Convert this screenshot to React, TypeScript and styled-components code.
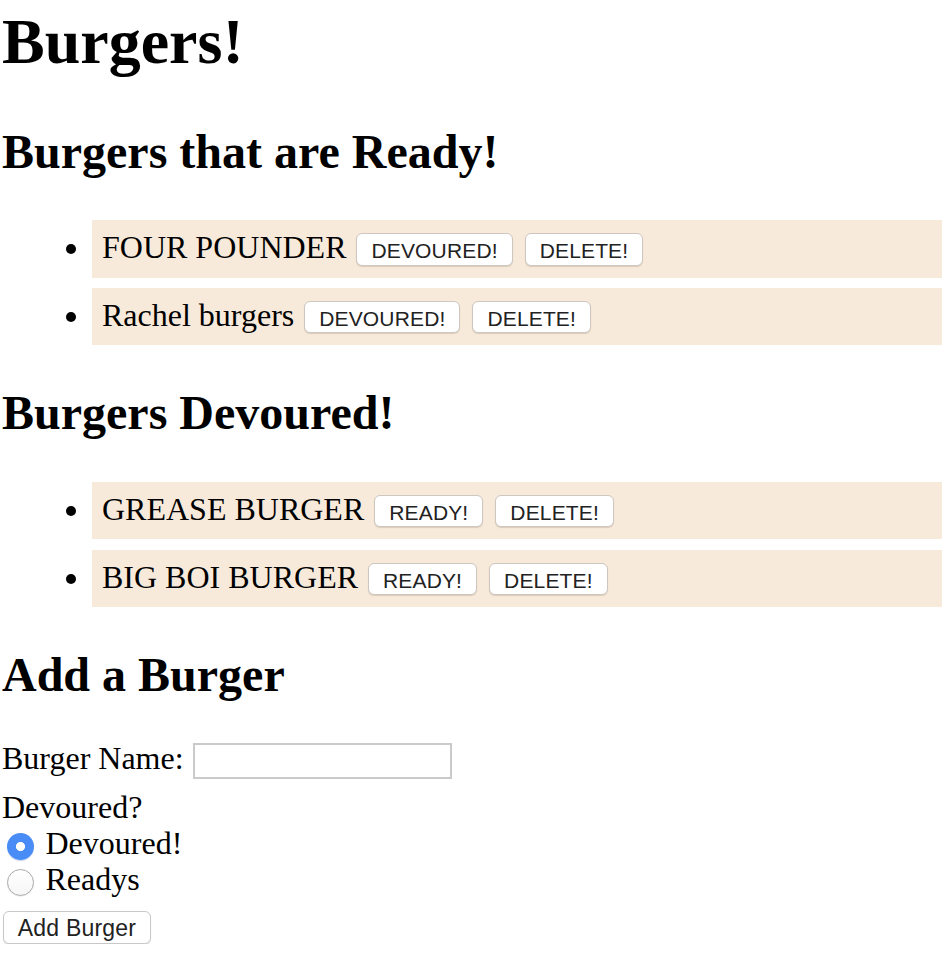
import React, { useState } from "react";
import styled, { createGlobalStyle } from "styled-components";

type Burger = { id: number; name: string; devoured: boolean };

const initialBurgers: Burger[] = [
  { id: 1, name: "FOUR POUNDER", devoured: false },
  { id: 2, name: "Rachel burgers", devoured: false },
  { id: 3, name: "GREASE BURGER", devoured: true },
  { id: 4, name: "BIG BOI BURGER", devoured: true },
];

const GlobalStyle = createGlobalStyle`
  html, body {
    margin: 0;
    padding: 0;
    background: #fff;
  }
  body {
    font-family: "Liberation Serif", "Times New Roman", serif;
    font-size: 32px;
    color: #000;
  }
`;

const Page = styled.div`
  padding: 6px 0 0 2px;
`;

const Title = styled.h1`
  margin: 0 0 46.5px;
  font-size: 64px;
  line-height: 72px;
  font-weight: bold;
`;

const SectionTitle = styled.h2`
  margin: 0;
  font-size: 48px;
  line-height: 54px;
  font-weight: bold;
`;

const BurgerList = styled.ul`
  margin: 41.5px 0 41px;
  padding: 0 0 0 80px;
  list-style: disc outside;
`;

const BurgerItem = styled.li`
  margin: 0 0 0 10px;
  padding: 8px 10px 10px;
  line-height: 39.5px;
  background: #f8eadb;

  & + & {
    margin-top: 10.3px;
  }
`;

const ItemButton = styled.button`
  display: inline-block;
  vertical-align: baseline;
  box-sizing: border-box;
  height: 32.5px;
  margin: 0 2px;
  padding: 3px 14px 0;
  font-family: "Liberation Sans", Arial, sans-serif;
  font-size: 21px;
  letter-spacing: 0.15px;
  line-height: 27.5px;
  color: #222;
  background: #fff;
  border: 1px solid #cdc7c0;
  border-radius: 6px;
  box-shadow: 0 1px 1px rgba(90, 70, 40, 0.18);
  cursor: pointer;
`;

const AddForm = styled.form`
  margin-top: 37.5px;
`;

const FieldRow = styled.div`
  display: flex;
  align-items: flex-start;
  line-height: 37px;
`;

const NameInput = styled.input`
  box-sizing: border-box;
  width: 259.4px;
  height: 35.4px;
  margin: 3.6px 0 0 9px;
  padding: 0 6px;
  font-family: "Liberation Sans", Arial, sans-serif;
  font-size: 22px;
  border: 2px solid #cacaca;
  border-radius: 0;
  outline: none;
`;

const Question = styled.div`
  margin-top: 10.8px;
  line-height: 36px;
`;

const RadioRow = styled.label`
  display: flex;
  align-items: flex-start;
  line-height: 36px;
`;

const Radio = styled.input`
  appearance: none;
  box-sizing: border-box;
  flex: none;
  width: 27px;
  height: 27px;
  margin: 8px 12px 0 4.5px;
  border-radius: 50%;
  border: 1.5px solid #aaaaaa;
  background: linear-gradient(#fff, #f6f6f6);
  box-shadow: 0 0.5px 1px rgba(0, 0, 0, 0.1);
  cursor: pointer;

  &:checked {
    border: none;
    background: radial-gradient(circle, #fff 0 4.2px, #4a8cf6 4.9px);
    box-shadow: 0 1px 1px rgba(30, 80, 180, 0.25);
  }
`;

const AddButton = styled.button`
  display: block;
  box-sizing: border-box;
  width: 147.4px;
  height: 33.3px;
  margin: 13.5px 0 0 1.3px;
  padding: 1px 0 0;
  font-family: "Liberation Sans", Arial, sans-serif;
  font-size: 23px;
  letter-spacing: 0.2px;
  color: #222;
  background: #fff;
  border: 1px solid #c8c8c8;
  border-radius: 6px;
  box-shadow: 0 1px 1px rgba(0, 0, 0, 0.12);
  cursor: pointer;
`;

export default function App() {
  const [burgers, setBurgers] = useState<Burger[]>(initialBurgers);
  const [name, setName] = useState("");
  const [devoured, setDevoured] = useState(true);

  const toggle = (id: number) =>
    setBurgers((list) =>
      list.map((b) => (b.id === id ? { ...b, devoured: !b.devoured } : b))
    );

  const remove = (id: number) =>
    setBurgers((list) => list.filter((b) => b.id !== id));

  const add = (e: React.FormEvent) => {
    e.preventDefault();
    if (!name.trim()) return;
    setBurgers((list) => [
      ...list,
      { id: Date.now(), name: name.trim(), devoured },
    ]);
    setName("");
  };

  const ready = burgers.filter((b) => !b.devoured);
  const eaten = burgers.filter((b) => b.devoured);

  return (
    <Page>
      <GlobalStyle />
      <Title>Burgers!</Title>

      <SectionTitle>Burgers that are Ready!</SectionTitle>
      <BurgerList>
        {ready.map((b) => (
          <BurgerItem key={b.id}>
            {b.name}{" "}
            <ItemButton type="button" onClick={() => toggle(b.id)}>
              DEVOURED!
            </ItemButton>{" "}
            <ItemButton type="button" onClick={() => remove(b.id)}>
              DELETE!
            </ItemButton>
          </BurgerItem>
        ))}
      </BurgerList>

      <SectionTitle>Burgers Devoured!</SectionTitle>
      <BurgerList>
        {eaten.map((b) => (
          <BurgerItem key={b.id}>
            {b.name}{" "}
            <ItemButton type="button" onClick={() => toggle(b.id)}>
              READY!
            </ItemButton>{" "}
            <ItemButton type="button" onClick={() => remove(b.id)}>
              DELETE!
            </ItemButton>
          </BurgerItem>
        ))}
      </BurgerList>

      <SectionTitle>Add a Burger</SectionTitle>
      <AddForm onSubmit={add}>
        <FieldRow>
          <span>Burger Name:</span>
          <NameInput value={name} onChange={(e) => setName(e.target.value)} />
        </FieldRow>
        <Question>Devoured?</Question>
        <RadioRow>
          <Radio
            type="radio"
            name="devoured"
            checked={devoured}
            onChange={() => setDevoured(true)}
          />
          Devoured!
        </RadioRow>
        <RadioRow>
          <Radio
            type="radio"
            name="devoured"
            checked={!devoured}
            onChange={() => setDevoured(false)}
          />
          Readys
        </RadioRow>
        <AddButton type="submit">Add Burger</AddButton>
      </AddForm>
    </Page>
  );
}
